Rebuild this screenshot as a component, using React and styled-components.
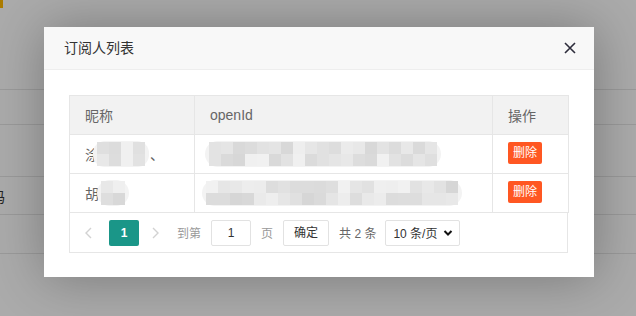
import React from "react";
import styled, { createGlobalStyle } from "styled-components";

const Global = createGlobalStyle`
  html, body { margin: 0; padding: 0; }
  body {
    width: 636px;
    height: 316px;
    overflow: hidden;
    font-family: "Liberation Sans", "Noto Sans CJK SC", sans-serif;
    background: #ffffff;
  }
`;

const Page = styled.div`
  position: relative;
  width: 636px;
  height: 316px;
  overflow: hidden;
  background: #ffffff;
`;

const Tag = styled.div`
  width: 3px;
  height: 8px;
  background: #ffb800;
`;

const BgHead = styled.div`
  margin-top: 81px;
  height: 34px;
  border-top: 1px solid #e6e6e6;
`;

const BgRow = styled.div`
  height: ${(p) => p.h}px;
  border-top: 1px solid #e6e6e6;
  display: flex;
  align-items: center;
  font-size: 14px;
  color: #333;
`;

const BgText = styled.span`
  margin-left: -9px;
`;

const Shade = styled.div`
  position: absolute;
  inset: 0;
  background: rgba(0, 0, 0, 0.33);
`;

const Dialog = styled.div`
  position: absolute;
  left: 44px;
  top: 27px;
  width: 550px;
  height: 250px;
  background: #fff;
  box-shadow: 1px 1px 50px rgba(0, 0, 0, 0.3);
  display: flex;
  flex-direction: column;
`;

const Title = styled.div`
  position: relative;
  height: 42px;
  line-height: 42px;
  padding-left: 20px;
  background: #f8f8f8;
  border-bottom: 1px solid #eee;
  font-size: 14px;
  color: #333;
`;

const Close = styled.svg`
  position: absolute;
  right: 18px;
  top: 15px;
`;

const Content = styled.div`
  padding: 25px;
`;

const Table = styled.table`
  width: 499px;
  border-collapse: collapse;
  table-layout: fixed;
  font-size: 14px;
  color: #666;
`;

const Th = styled.th`
  width: ${(p) => p.w}px;
  height: 39px;
  padding: 0 15px;
  text-align: left;
  font-weight: normal;
  background: #f2f2f2;
  border: 1px solid #e6e6e6;
  box-sizing: border-box;
`;

const Td = styled.td`
  height: 39px;
  padding: 0 ${(p) => p.px ?? 15}px;
  border: 1px solid #e6e6e6;
  box-sizing: border-box;
`;

const Cell = styled.div`
  display: flex;
  align-items: center;
`;

const Mosaic = styled.div`
  display: grid;
  grid-template-columns: repeat(${(p) => p.cols}, 12px);
  grid-auto-rows: ${(p) => p.rowH}px;
  padding: 1px 4px;
  margin-left: ${(p) => p.ml}px;
  background: #f3f3f3;
  border-radius: ${(p) => p.r}px;
  filter: blur(0.7px);
`;

const Px = styled.div`
  background: ${(p) => p.c};
`;

const DelBtn = styled.span`
  display: inline-block;
  height: 22px;
  line-height: 22px;
  padding: 0 5px;
  background: #ff5722;
  color: #fff;
  font-size: 12px;
  border-radius: 2px;
  margin-top: -3px;
`;

const Pager = styled.div`
  width: 499px;
  height: 40px;
  box-sizing: border-box;
  border: 1px solid #e6e6e6;
  border-top: none;
  display: flex;
  align-items: center;
  font-size: 12px;
  color: #333;
`;

const Arrow = styled.svg`
  margin-left: ${(p) => p.ml}px;
  width: 24px;
  height: 26px;
`;

const PageNum = styled.span`
  margin-left: 9px;
  width: 30px;
  height: 26px;
  line-height: 26px;
  text-align: center;
  background: #1a9688;
  color: #fff;
  border-radius: 2px;
  font-weight: bold;
`;

const PagerText = styled.span`
  margin-left: ${(p) => p.ml}px;
  color: ${(p) => p.c};
  white-space: pre;
`;

const PageInput = styled.input`
  margin-left: 10px;
  width: 40px;
  height: 26px;
  box-sizing: border-box;
  border: 1px solid #e2e2e2;
  border-radius: 2px;
  text-align: center;
  font-size: 12px;
  color: #333;
  font-family: inherit;
  padding: 0;
`;

const GoBtn = styled.span`
  margin-left: 10px;
  height: 26px;
  line-height: 24px;
  box-sizing: border-box;
  padding: 0 10px;
  border: 1px solid #e2e2e2;
  border-radius: 2px;
  background: #fff;
  color: #333;
`;

const Limit = styled.span`
  margin-left: 9px;
  width: 75px;
  height: 26px;
  box-sizing: border-box;
  border: 1px solid #e2e2e2;
  border-radius: 2px;
  display: flex;
  align-items: center;
  padding: 0 6px 0 7px;
  justify-content: space-between;
  color: #333;
`;

function shades(n, seed) {
  const out = [];
  let s = seed;
  for (let i = 0; i < n; i++) {
    s = (s * 9301 + 49297) % 233280;
    const v = 214 + Math.floor((s / 233280) * 28);
    out.push(`rgb(${v},${v},${v})`);
  }
  return out;
}

function Blur({ cols, rows = 2, rowH = 12, ml = 0, r = 12, seed = 1 }) {
  return (
    <Mosaic cols={cols} rowH={rowH} ml={ml} r={r}>
      {shades(cols * rows, seed).map((c, i) => (
        <Px key={i} c={c} />
      ))}
    </Mosaic>
  );
}

const Chevron = ({ dir, ml }) => (
  <Arrow ml={ml} viewBox="0 0 24 26">
    <path
      d={dir === "left" ? "M15 8 L10 13 L15 18" : "M9 8 L14 13 L9 18"}
      fill="none"
      stroke="#d2d2d2"
      strokeWidth="1.4"
    />
  </Arrow>
);

export default function App() {
  return (
    <Page>
      <Global />
      <Tag />
      <BgHead />
      <BgRow h={51} />
      <BgRow h={37}>
        <BgText>码</BgText>
      </BgRow>
      <BgRow h={38} />
      <BgRow h={40} />
      <Shade />
      <Dialog>
        <Title>
          订阅人列表
          <Close width="12" height="12" viewBox="0 0 12 12">
            <path d="M1 1 L11 11 M11 1 L1 11" stroke="#2e2d3c" strokeWidth="1.6" />
          </Close>
        </Title>
        <Content>
          <Table>
            <thead>
              <tr>
                <Th w={125}>昵称</Th>
                <Th w={298}>openId</Th>
                <Th w={76}>操作</Th>
              </tr>
            </thead>
            <tbody>
              <tr>
                <Td>
                  <Cell>
                    <span>涂</span>
                    <Blur cols={4} ml={-6} seed={3} />
                    <span style={{ marginLeft: 1 }}>、</span>
                  </Cell>
                </Td>
                <Td px={10}>
                  <Cell>
                    <Blur cols={19} seed={7} r={14} />
                  </Cell>
                </Td>
                <Td>
                  <DelBtn>删除</DelBtn>
                </Td>
              </tr>
              <tr>
                <Td>
                  <Cell>
                    <span>胡</span>
                    <Blur cols={2} ml={-2} seed={11} r={14} />
                  </Cell>
                </Td>
                <Td px={7}>
                  <Cell>
                    <Blur cols={21} seed={19} r={14} />
                  </Cell>
                </Td>
                <Td>
                  <DelBtn>删除</DelBtn>
                </Td>
              </tr>
            </tbody>
          </Table>
          <Pager>
            <Chevron dir="left" ml={6} />
            <PageNum>1</PageNum>
            <Chevron dir="right" ml={5} />
            <PagerText ml={9} c="#999">到第</PagerText>
            <PageInput defaultValue="1" />
            <PagerText ml={10} c="#999">页</PagerText>
            <GoBtn>确定</GoBtn>
            <PagerText ml={10} c="#666">共 2 条</PagerText>
            <Limit>
              <span>10 条/页</span>
              <svg width="10" height="8" viewBox="0 0 10 8">
                <path d="M1.5 2 L5 5.5 L8.5 2" fill="none" stroke="#111" strokeWidth="2" />
              </svg>
            </Limit>
          </Pager>
        </Content>
      </Dialog>
    </Page>
  );
}
